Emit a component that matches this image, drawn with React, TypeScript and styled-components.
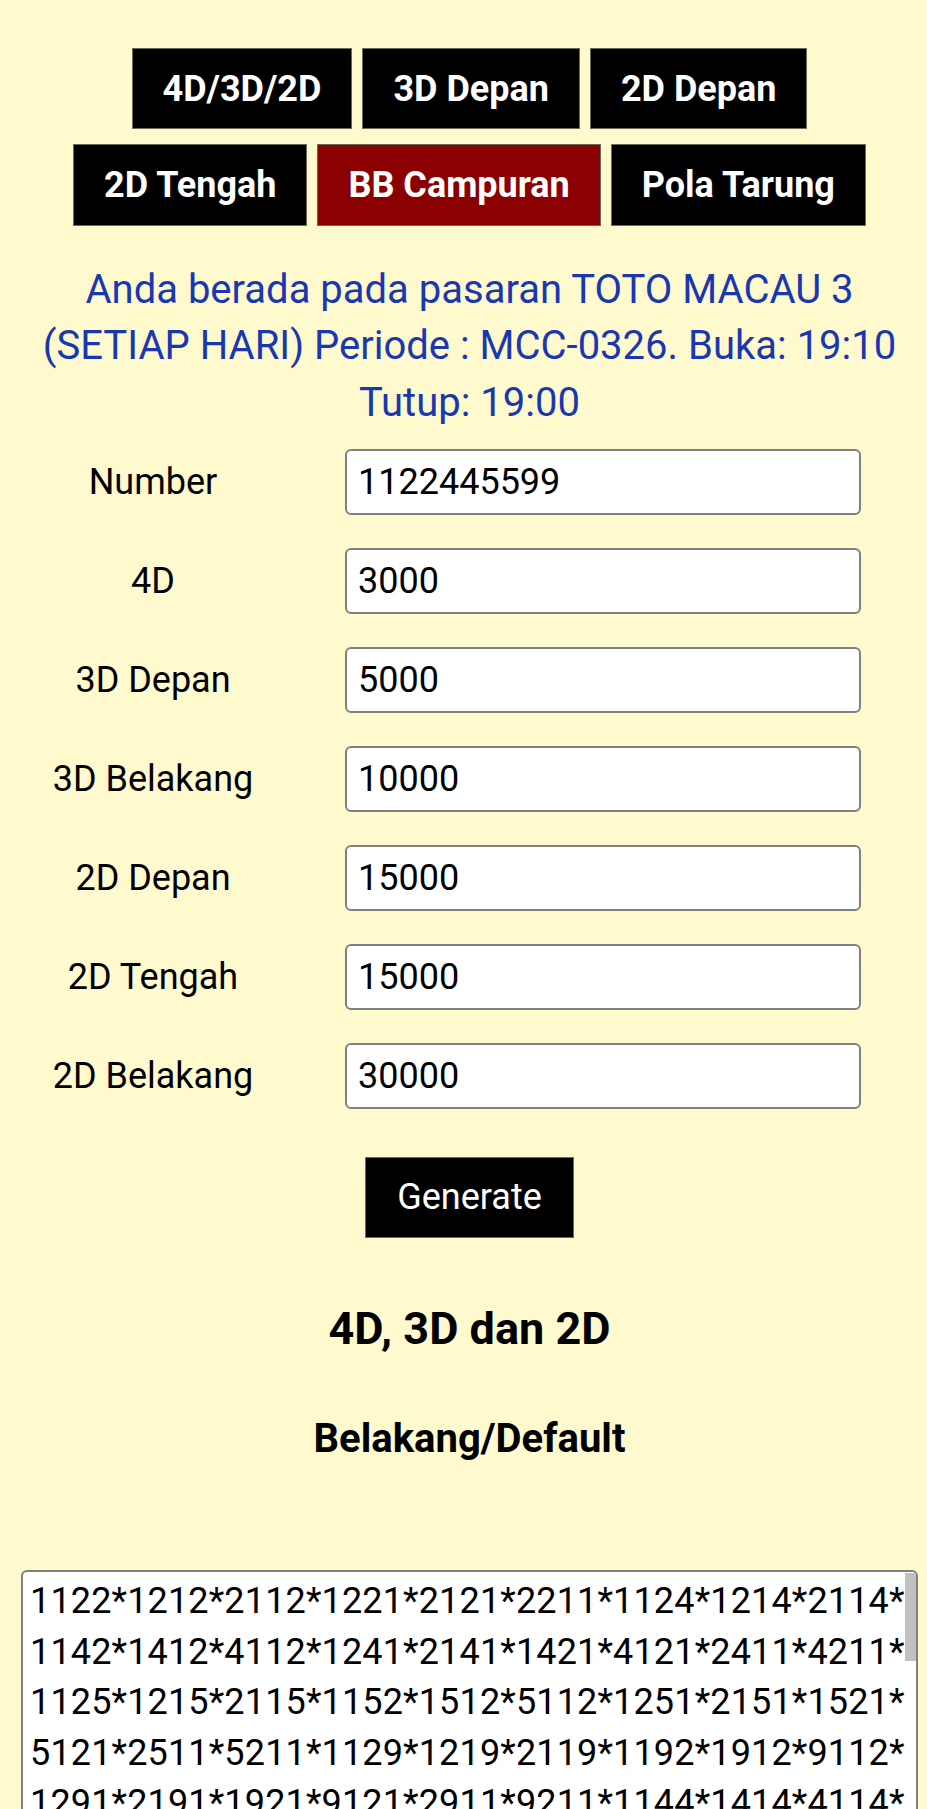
import styled, { createGlobalStyle } from "styled-components";

const GlobalStyle = createGlobalStyle`
  html, body {
    margin: 0;
    padding: 0;
    background: #fffacd;
  }
  body {
    font-family: Roboto, "Liberation Sans", sans-serif;
    line-height: 1.4;
    color: #000;
  }
  * {
    box-sizing: border-box;
  }
`;

const Page = styled.div`
  padding: 48px 9px 0 21px;
  display: flex;
  flex-direction: column;
  align-items: stretch;
`;

const Nav = styled.nav`
  display: flex;
  flex-direction: column;
  gap: 15px;
`;

const NavRow = styled.div`
  display: flex;
  justify-content: center;
  gap: 10px;
`;

const NavButton = styled.button<{ $active?: boolean }>`
  font-family: Roboto, "Liberation Sans", sans-serif;
  font-size: 36px;
  font-weight: 700;
  line-height: 1.4;
  color: #fff;
  background: ${(p) => (p.$active ? "#8b0000" : "#000")};
  border: 1px solid #6b6b5a;
  padding: 14.5px 30px;
  cursor: pointer;
`;

const Info = styled.p`
  margin: 36px 0 0;
  font-size: 40px;
  line-height: 1.41;
  color: #1a37b2;
  text-align: center;
`;

const Form = styled.div`
  margin-top: 18px;
  display: grid;
  grid-template-columns: 264px 516px;
  column-gap: 60px;
  row-gap: 33px;
  align-items: center;
`;

const Label = styled.label`
  font-size: 36px;
  text-align: center;
`;

const Field = styled.input`
  height: 66px;
  width: 100%;
  font-family: Roboto, "Liberation Sans", sans-serif;
  font-size: 36px;
  color: #000;
  background: #fff;
  border: 2px solid #808080;
  border-radius: 6px;
  padding: 0 11px;
  outline: none;
`;

const Actions = styled.div`
  margin-top: 48px;
  display: flex;
  justify-content: center;
`;

const GenerateButton = styled.button`
  font-family: Roboto, "Liberation Sans", sans-serif;
  font-size: 36px;
  line-height: 1.4;
  color: #fff;
  background: #000;
  border: 1px solid #6b6b5a;
  padding: 14.5px 31px;
  cursor: pointer;
`;

const SectionTitle = styled.h3`
  margin: 59px 0 0;
  font-size: 45px;
  font-weight: 700;
  line-height: 1.4;
  text-align: center;
`;

const SubTitle = styled.h4`
  margin: 51px 0 0;
  font-size: 40px;
  font-weight: 700;
  line-height: 1.4;
  text-align: center;
`;

const OutputBox = styled.div`
  position: relative;
  margin-top: 103px;
`;

const Output = styled.textarea`
  display: block;
  width: 100%;
  height: 560px;
  font-family: Roboto, "Liberation Sans", sans-serif;
  font-size: 36px;
  letter-spacing: 0.15px;
  line-height: 1.4;
  color: #000;
  background: #fff;
  border: 2px solid #808080;
  border-radius: 6px;
  padding: 4px 0 4px 7px;
  resize: none;
  outline: none;
  overflow-y: hidden;
`;

// scrollbar overlay ala android
const ScrollThumb = styled.div`
  position: absolute;
  top: 3px;
  right: 2px;
  width: 11px;
  height: 88px;
  background: #c1c1c1;
`;

const navTop = [
  { label: "4D/3D/2D" },
  { label: "3D Depan" },
  { label: "2D Depan" },
];

const navBottom = [
  { label: "2D Tengah" },
  { label: "BB Campuran", active: true },
  { label: "Pola Tarung" },
];

const fields = [
  { label: "Number", value: "1122445599" },
  { label: "4D", value: "3000" },
  { label: "3D Depan", value: "5000" },
  { label: "3D Belakang", value: "10000" },
  { label: "2D Depan", value: "15000" },
  { label: "2D Tengah", value: "15000" },
  { label: "2D Belakang", value: "30000" },
];

// permutasi: karakter terakhir dipindah dari kanan ke kiri
function perms(s: string): string[] {
  if (s.length <= 1) return [s];
  const out: string[] = [];
  for (let i = s.length - 1; i >= 0; i--) {
    const rest = s.slice(0, i) + s.slice(i + 1);
    for (const p of perms(rest)) out.push(p + s[i]);
  }
  return out;
}

function buildLines(num: string, size: number) {
  const combos: string[] = [];
  const seenCombo = new Set<string>();
  const n = num.length;
  for (let a = 0; a < n; a++)
    for (let b = a + 1; b < n; b++)
      for (let c = b + 1; c < n; c++)
        for (let d = c + 1; d < n; d++) {
          const key = num[a] + num[b] + num[c] + num[d];
          if (!seenCombo.has(key)) {
            seenCombo.add(key);
            combos.push(key);
          }
        }
  const result: string[] = [];
  for (const combo of combos) {
    const seen = new Set<string>();
    for (const p of perms(combo)) {
      if (!seen.has(p)) {
        seen.add(p);
        result.push(p);
      }
    }
  }
  return result.slice(0, size).map((x) => x + "*").join("");
}

export default function App() {
  const output = buildLines("1122445599", 630);

  return (
    <>
      <GlobalStyle />
      <Page>
        <Nav>
          <NavRow>
            {navTop.map((item) => (
              <NavButton key={item.label}>{item.label}</NavButton>
            ))}
          </NavRow>
          <NavRow>
            {navBottom.map((item) => (
              <NavButton key={item.label} $active={item.active}>
                {item.label}
              </NavButton>
            ))}
          </NavRow>
        </Nav>

        <Info>
          Anda berada pada pasaran TOTO MACAU 3 (SETIAP HARI) Periode :
          MCC-0326. Buka: 19:10 Tutup: 19:00
        </Info>

        <Form>
          {fields.map((f) => [
            <Label key={f.label + "-l"}>{f.label}</Label>,
            <Field key={f.label + "-f"} defaultValue={f.value} />,
          ])}
        </Form>

        <Actions>
          <GenerateButton>Generate</GenerateButton>
        </Actions>

        <SectionTitle>4D, 3D dan 2D</SectionTitle>
        <SubTitle>Belakang/Default</SubTitle>

        <OutputBox>
          <Output readOnly value={output} />
          <ScrollThumb />
        </OutputBox>
      </Page>
    </>
  );
}
